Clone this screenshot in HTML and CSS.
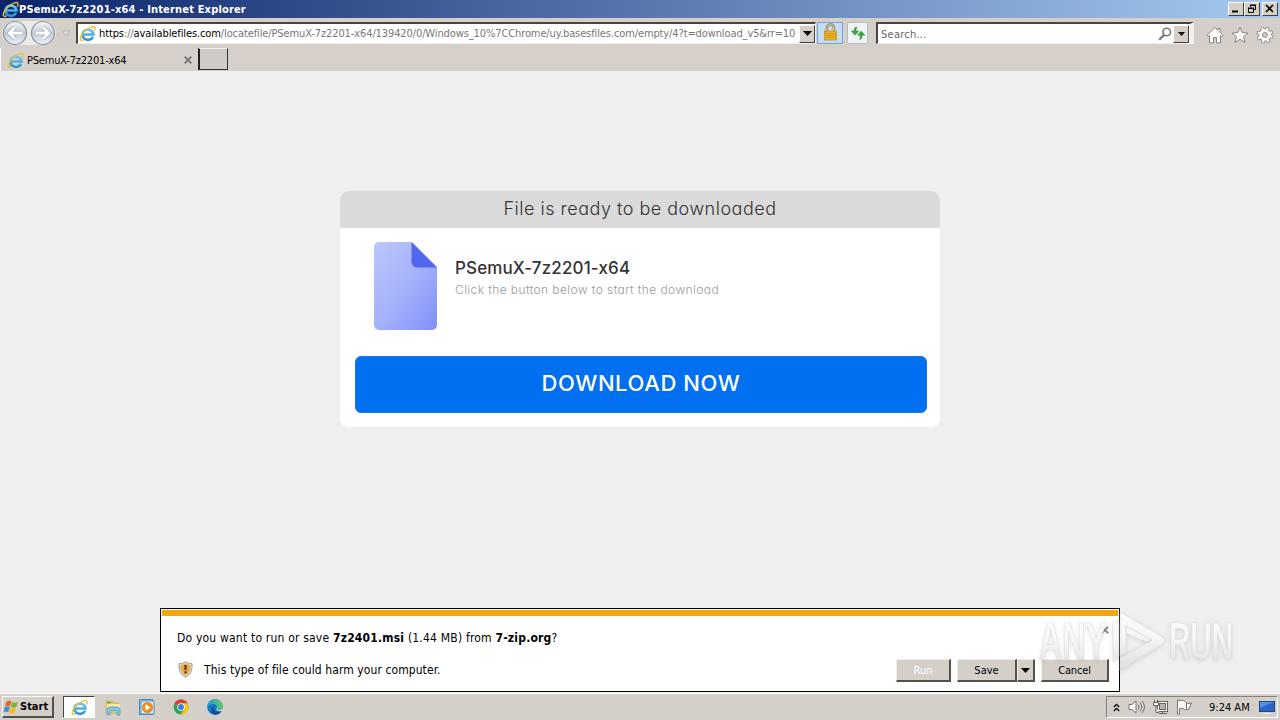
FILE: index.html
```html
<!DOCTYPE html>
<html lang="en">
<head>
    <meta charset="UTF-8">
    <meta name="viewport" content="width=device-width, initial-scale=1.0">
    <title>PSemuX-7z2201-x64</title>
    <link rel="stylesheet" href="styles.css">
</head>
<body>
    <svg class="defs" width="0" height="0">
        <defs>
            <linearGradient id="ieBlue" x1="0" y1="0" x2="0" y2="1">
                <stop offset="0" stop-color="#6cc6f2"/>
                <stop offset="1" stop-color="#2b93d8"/>
            </linearGradient>
            <symbol id="ie" viewBox="0 0 16 16">
                <path d="M13.2 11A5.200 4.800 0 1 1 13.600 8.900H4.500" fill="none" stroke="url(#ieBlue)" stroke-width="2.500"/>
                <path d="M4.300 13.900C.6 15.700.2 12.500 3 8.300 6.200 4 13 .2 14.700 1.800c.8.800.4 2.200-.3 3.500" fill="none" stroke="#efbf2a" stroke-width="1.300"/>
            </symbol>
        </defs>
    </svg>

    <div class="titlebar">
        <svg class="title-icon" width="17" height="17"><use href="#ie"/></svg>
        <span class="title-text">PSemuX-7z2201-x64 - Internet Explorer</span>
        <div class="window-buttons">
            <div class="win-btn"><svg width="13" height="11"><path d="M3 8.500h6" stroke="#000" stroke-width="2"/></svg></div>
            <div class="win-btn restore"><svg width="13" height="11"><path d="M5.500 4V2.500h5v4H9M5 2h6M3.500 5.500h5v4h-5zM3 5h6" fill="none" stroke="#000"/></svg></div>
            <div class="win-btn"><svg width="13" height="11"><path d="M3 2l7 7M10 2L3 9" stroke="#000" stroke-width="1.600"/></svg></div>
        </div>
    </div>

    <div class="navbar">
        <svg class="nav-arrows" width="72" height="28" viewBox="0 0 72 28">
            <defs>
                <linearGradient id="ball" x1="0" y1="0" x2="0" y2="1">
                    <stop offset="0" stop-color="#f4f6f8"/>
                    <stop offset=".5" stop-color="#c3ccd5"/>
                    <stop offset="1" stop-color="#e9f1f7"/>
                </linearGradient>
            </defs>
            <rect x="2" y="2" width="54" height="24" rx="12" fill="#eceae7"/>
            <circle cx="15" cy="14" r="11.500" fill="url(#ball)" stroke="#8795a3" stroke-width="1.200"/>
            <circle cx="43" cy="14" r="11.500" fill="url(#ball)" stroke="#8795a3" stroke-width="1.200"/>
            <path d="M15 8.200L9.200 14l5.800 5.800M10 14h12" fill="none" stroke="#93a3b4" stroke-width="4.200"/>
            <path d="M15 8.200L9.200 14l5.800 5.800M10 14h12" fill="none" stroke="#fff" stroke-width="2.800"/>
            <path d="M43 8.200l5.800 5.800-5.800 5.800M48 14H36" fill="none" stroke="#93a3b4" stroke-width="4.200"/>
            <path d="M43 8.200l5.800 5.800-5.800 5.800M48 14H36" fill="none" stroke="#fff" stroke-width="2.800"/>
            <path d="M62 12h8l-4 4.500z" fill="#e6e2dd" stroke="#aaa6a1" stroke-width=".8"/>
        </svg>
        <div class="address">
            <svg class="address-icon" width="17" height="17"><use href="#ie"/></svg>
            <div class="url"><span class="url-text">https<i>://</i>availablefiles.com<i>/locatefile/PSemuX-7z2201-x64/139420/0/Windows_10%7CChrome/uy.basesfiles.com/empty/4?t=download_v5&amp;rr=10</i></span></div>
            <div class="drop"><svg width="9" height="5"><path d="M0 0h9L4.500 5z"/></svg></div>
        </div>
        <div class="lock">
            <svg width="15" height="18" viewBox="0 0 15 18">
                <path d="M4 9V5a3.500 3.500 0 0 1 7 0v4" fill="none" stroke="#8c8462" stroke-width="2.600"/>
                <path d="M4 9V5a3.500 3.500 0 0 1 7 0v4" fill="none" stroke="#d9cf9c" stroke-width="1"/>
                <rect x="1.500" y="8" width="12" height="9" fill="#efb321" stroke="#c08a1c" stroke-width=".7"/>
                <path d="M2 10.500h11M2 12.500h11M2 14.500h11" stroke="#c58a12" stroke-width=".7"/>
            </svg>
        </div>
        <div class="refresh">
            <svg width="16" height="16" viewBox="0 0 16 16">
                <path d="M7 2C4.500 2 4 4 4 6H1.200l3.800 4.200L8.800 6H6C6 4.500 6.200 3 7 2z" fill="#37a83c" stroke="#1f7f2a" stroke-width=".4"/>
                <path d="M9.500 14.500c2.300 0 2.700-2 2.700-4.200H15l-3.800-4.200-3.800 4.200h2.800c0 1.500 0 3.200-.7 4.200z" fill="#37a83c" stroke="#1f7f2a" stroke-width=".4"/>
            </svg>
        </div>
        <div class="search">
            <span class="search-text">Search...</span>
            <svg width="14" height="14" viewBox="0 0 14 14" fill="none" stroke="#777"><circle cx="8.700" cy="5" r="3.800" stroke-width="1.600"/><path d="M6 8l-4.800 4.800" stroke-width="2.300"/></svg>
            <div class="drop"><svg width="7" height="4"><path d="M0 0h7L3.500 4z"/></svg></div>
        </div>
        <div class="commands">
            <svg width="18" height="18" viewBox="0 0 18 18" fill="#fff" stroke="#85827e"><path d="M9 1.500L1 9.300l1.300 1.300L3.500 9.500v7.300h4v-5.300h3v5.300h4V9.500l1.200 1.100L17 9.300l-3-3V2.500h-2v1.900z"/></svg>
            <svg width="18" height="18" viewBox="0 0 18 18" fill="#fff" stroke="#85827e"><path d="M9 1.200l2.200 5.400 5.800.4-4.500 3.700 1.500 5.700L9 13.300l-5 3.100 1.500-5.700L1 7l5.800-.4z"/></svg>
            <svg width="18" height="18" viewBox="0 0 18 18">
                <circle cx="9" cy="9" r="6.500" fill="none" stroke="#85827e" stroke-width="4" stroke-dasharray="3 2.105"/>
                <circle cx="9" cy="9" r="4.800" fill="#fff" stroke="#85827e" stroke-width="3.500"/>
                <circle cx="9" cy="9" r="6.200" fill="none" stroke="#fff" stroke-width="3" stroke-dasharray="2 2.869" stroke-dashoffset="-.5"/>
                <circle cx="9" cy="9" r="4.300" fill="#d4d0c8" stroke="#fff" stroke-width="3"/>
                <circle cx="9" cy="9" r="2.400" fill="#d4d0c8" stroke="#85827e" stroke-width=".9"/>
            </svg>
        </div>
    </div>

    <div class="tabs">
        <div class="tab">
            <svg width="17" height="17"><use href="#ie"/></svg>
            <span class="tab-text">PSemuX-7z2201-x64</span>
            <svg class="tab-close" width="8" height="8"><path d="M.7.700l6.600 6.600M7.300.7L.7 7.300" stroke="#77736f" stroke-width="1.800"/></svg>
        </div>
        <div class="new-tab"></div>
    </div>

    <div class="page">
        <div class="card">
            <div class="card-header"><span>File is ready to be downloaded</span></div>
            <div class="file">
                <svg width="63" height="88" viewBox="0 0 63 88">
                    <defs>
                        <linearGradient id="doc" x1="0" y1="0" x2="1" y2="1">
                            <stop offset="0" stop-color="#bcc7fd"/>
                            <stop offset=".5" stop-color="#a6b2fa"/>
                            <stop offset="1" stop-color="#8090f8"/>
                        </linearGradient>
                    </defs>
                    <path d="M5 0h33l25 25v58a5 5 0 0 1-5 5H5a5 5 0 0 1-5-5V5a5 5 0 0 1 5-5z" fill="url(#doc)"/>
                    <path d="M37.500 0L63 25.500H43a5.500 5.500 0 0 1-5.500-5.500z" fill="#4f68ee"/>
                </svg>
                <div class="file-info">
                    <div class="file-name">PSemuX-7z2201-x64</div>
                    <div class="file-hint">Click the button below to start the download</div>
                </div>
            </div>
            <div class="download"><span>DOWNLOAD NOW</span></div>
        </div>
    </div>

    <div class="notice">
        <div class="notice-body">
            <div class="notice-row">
                <span class="question">Do you want to run or save <b>7z2401.msi</b> (1.44 MB) from <b>7-zip.org</b>?</span>
                <svg class="notice-close" width="8" height="8"><path d="M.7.700l6.600 6.600M7.300.7L.7 7.300" stroke="#858585" stroke-width="1.800"/></svg>
            </div>
            <div class="notice-row actions">
                <svg width="15" height="17" viewBox="0 0 15 17">
                    <path d="M7.500.7c2 1.500 4 1.800 6.500 1.800.5 6.500-1 11-6.500 13.800C2 13.500.5 9 1 2.500c2.500 0 4.500-.3 6.500-1.800z" fill="#d9d5cc" stroke="#a5a19b"/>
                    <path d="M7.500 2.600c1.500 1 3 1.300 4.800 1.400.2 5-1 8-4.800 10.300C3.700 12 2.500 9 2.700 4c1.800-.1 3.300-.4 4.800-1.400z" fill="#e9a945"/>
                    <path d="M7.500 4v5M7.500 10.300v2" stroke="#5b2413" stroke-width="2"/>
                </svg>
                <span class="warning">This type of file could harm your computer.</span>
                <div class="buttons">
                    <div class="btn run disabled">Run</div>
                    <div class="btn save">Save</div>
                    <div class="btn more"><svg width="9" height="5"><path d="M0 0h9L4.500 5z"/></svg></div>
                    <div class="btn cancel">Cancel</div>
                </div>
            </div>
        </div>
    </div>

    <svg class="watermark" width="200" height="66" viewBox="0 0 200 66">
        <defs>
            <linearGradient id="fade" gradientUnits="userSpaceOnUse" x1="0" y1="8" x2="0" y2="60">
                <stop offset="0" stop-color="#fff"/>
                <stop offset=".4" stop-color="#fafafa"/>
                <stop offset="1" stop-color="#dedede"/>
            </linearGradient>
        </defs>
        <g fill="url(#fade)" fill-opacity=".85" stroke="#d0d0d0" stroke-opacity=".6" stroke-width=".7">
            <text x="3" y="50" font-size="51" textLength="68" lengthAdjust="spacingAndGlyphs">ANY</text>
            <path d="M77 13h6v36l-6 4z"/>
            <path d="M84 3l44 26v5L84 62V49l32-18-26-14v26l-6 4zM90 17v7l20 9 6-2z" fill-rule="evenodd"/>
            <text x="133" y="50" font-size="51" textLength="64" lengthAdjust="spacingAndGlyphs">RUN</text>
        </g>
    </svg>

    <div class="taskbar">
        <div class="start">
            <svg width="17" height="16" viewBox="0 0 17 16">
                <path d="M3.500 2.500c2-1.200 3.500-1 5 0L7 7.500c-1.500-1-3-1.200-5 0z" fill="#e8602a"/>
                <path d="M9.300 3c1.700 1 3.500 1 5.700-.2l-1.500 5c-2 1-3.900 1.200-5.700.2z" fill="#7cb82f"/>
                <path d="M1.800 8.300c2-1.200 3.500-1 5 0l-1.500 5c-1.500-1-3-1.200-5 0z" fill="#3c8ed8"/>
                <path d="M7.600 8.800c1.700 1 3.500 1 5.700-.2l-1.500 5c-2 1-3.900 1.200-5.700.2z" fill="#f6bc1c"/>
            </svg>
            <span>Start</span>
        </div>
        <div class="task active"><svg width="17" height="17"><use href="#ie"/></svg></div>
        <div class="task">
            <svg width="18" height="18" viewBox="0 0 18 18">
                <path d="M2 3h6l1 2h6v10H2z" fill="#e8c962" stroke="#c7a544" stroke-width=".6"/>
                <path d="M3 6h13v8H3z" fill="#fbe99f"/>
                <path d="M3 4.500h4" stroke="#47a852" stroke-width="1.500"/>
                <path d="M3 17v-5c0-2 1-3 3-3h7c2 0 3 1 3 3v5h-3v-4H6v4z" fill="#84c5e8" stroke="#4c91bd" stroke-width=".7"/>
            </svg>
        </div>
        <div class="task">
            <svg width="18" height="18" viewBox="0 0 18 18">
                <rect x="1.500" y="1.500" width="13" height="15" fill="#b5d9f3" stroke="#4789bd"/>
                <rect x="3" y="3" width="13" height="13" fill="#d9eefb" stroke="#4d91c4"/>
                <circle cx="9.500" cy="9.500" r="5.500" fill="#f18b18"/>
                <path d="M7.500 6.200v6.600l5.200-3.300z" fill="#fff"/>
            </svg>
        </div>
        <div class="task">
            <svg width="18" height="18" viewBox="0 0 18 18">
                <circle cx="9" cy="9" r="7.500" fill="#34a353"/>
                <path d="M9 9L2.500 5.250A7.500 7.500 0 0 1 15.500 5.250H9z" fill="#e33b2e"/>
                <path d="M9 5.250h6.500A7.500 7.500 0 0 1 8.700 16.500L12.200 11z" fill="#fbc31b"/>
                <circle cx="9" cy="9" r="3.700" fill="#fff"/>
                <circle cx="9" cy="9" r="2.900" fill="#3b7ded"/>
            </svg>
        </div>
        <div class="task">
            <svg width="18" height="18" viewBox="0 0 18 18">
                <defs>
                    <linearGradient id="edge" x1="0" y1="0" x2="1" y2="0">
                        <stop offset="0" stop-color="#1f9be0"/>
                        <stop offset="1" stop-color="#5bd05c"/>
                    </linearGradient>
                </defs>
                <circle cx="9" cy="9" r="7.800" fill="#1475c7"/>
                <path d="M1.200 9C1.500 4 5 1.200 9 1.200c4.500 0 7.800 3.200 7.800 6.500 0 2.500-2 3.800-4.200 3.800-1.600 0-2.400-.7-2-1.400.8-1 .5-4.100-3-4.100C4.500 6 2 7.500 1.200 9z" fill="url(#edge)"/>
                <path d="M7.500 8c-1.300 3.500 2.500 7.500 8 5-2 3.500-5 4-7 3.700C5 15.500 4.500 10 7.500 8z" fill="#134d96"/>
                <path d="M10.500 9.700c-.5 1.200.5 2 2.200 2 1.300 0 2.300-.3 4.300-1.500l.5 2c-3.500 2-8 .7-7.500-2.300z" fill="#d5cfc9"/>
            </svg>
        </div>
        <div class="tray">
            <svg width="7" height="9" viewBox="0 0 7 9" fill="none" stroke="#000" stroke-width="1.300"><path d="M.8 4l2.700-2.700L6.200 4M.8 8l2.700-2.700L6.200 8"/></svg>
            <svg class="speaker" width="17" height="16" viewBox="0 0 17 16" stroke="#77736f"><path d="M1 5.500h3L8 2v12l-4-3.500H1z" fill="#fff"/><path d="M10 5.500q2 2.500 0 5M12 3.500q3.500 4.500 0 9M14 2q5 6 0 12" fill="none"/></svg>
            <svg class="network" width="17" height="16" viewBox="0 0 17 16" stroke="#66625e"><rect x="5.500" y="2.500" width="10" height="10" fill="#fff"/><rect x="7.500" y="4.500" width="6" height="6" fill="#b9b5af"/><path d="M10.500 13v2M7 14.500h8" fill="none"/><path d="M2.500 1v3M5.500 1v3M1.500 3.500h5v3h-5zM4 7v6.500h3" fill="#fff"/></svg>
            <svg class="flag" width="17" height="16" viewBox="0 0 17 16" fill="#fff" stroke="#77736f"><path d="M1.500 1v14h2V9.500c3-1 4 .5 6 1.500l1-.5h2l3-6.500c-2 .5-3.500.5-5 0C8 1 5.500 1 3.500 2V1zM10.500 4v6.500"/></svg>
            <span class="clock">9:24 AM</span>
            <svg class="desktop" width="17" height="15" viewBox="0 0 17 15"><rect x=".5" y="1.500" width="15" height="10" fill="#2467c8" stroke="#24477d"/><path d="M1 2h14L1 8z" fill="#4f92e2"/><path d="M4 13.500h8" stroke="#dfeaf5"/></svg>
        </div>
    </div>
</body>
</html>
```

FILE: styles.css
```css
body {
    margin: 0;
    width: 1280px;
    height: 720px;
    overflow: hidden;
    display: flex;
    flex-direction: column;
    position: relative;
    background-color: #efefef;
    font-family: "DejaVu Sans Condensed", "DejaVu Sans", sans-serif;
    font-size: 11px;
    color: #000;
}

svg {
    display: block;
    flex: none;
}

span {
    white-space: nowrap;
}

.defs {
    position: absolute;
}

/* title bar */
.titlebar {
    height: 18px;
    flex: none;
    display: flex;
    align-items: center;
    background: linear-gradient(to right, #0a246a, #a6caf0);
}

.title-icon {
    margin-left: 2px;
}

.title-text {
    color: #fff;
    font-weight: bold;
    font-size: 11px;
    letter-spacing: 0.17px;
}

.window-buttons {
    display: flex;
    margin-left: auto;
    margin-right: 2px;
}

.win-btn {
    width: 16px;
    height: 14px;
    box-sizing: border-box;
    background-color: #d4d0c8;
    border: 1px solid;
    border-color: #fff #404040 #404040 #fff;
}

.restore {
    margin-right: 2px;
}

/* navigation */
.navbar {
    height: 30px;
    flex: none;
    display: flex;
    align-items: flex-start;
    box-sizing: border-box;
    padding-top: 1px;
    background-color: #d5cfc9;
    border-top: 1px solid #d4d0c8;
}

.nav-arrows {
    margin-top: -1px;
}

.address {
    width: 740px;
    height: 22px;
    margin: 2px 0 0 4px;
    box-sizing: border-box;
    display: flex;
    align-items: center;
    background-color: #fff;
    border: 1px solid;
    border-width: 2px 1px 1px 2px;
    border-color: #494440 #f3f1ee #f3f1ee #494440;
}

.address-icon {
    margin-left: 1px;
}

.url {
    flex: 1;
    margin-left: 3px;
    margin-right: 3px;
    overflow: hidden;
    line-height: 19px;
    letter-spacing: -0.11px;
}

.url i {
    font-style: normal;
    color: #777;
}

.drop {
    width: 16px;
    height: 18px;
    flex: none;
    box-sizing: border-box;
    display: flex;
    align-items: center;
    justify-content: center;
    background-color: #d4d0c8;
    border: 1px solid;
    border-color: #fff #404040 #404040 #fff;
}

.lock {
    width: 26px;
    height: 22px;
    margin: 2px 0 0 1px;
    box-sizing: border-box;
    display: flex;
    justify-content: center;
    background-color: #c5dcf5;
    border: 1px solid #6fa6dc;
}

.refresh {
    width: 21px;
    height: 22px;
    margin: 2px 0 0 4px;
    box-sizing: border-box;
    display: flex;
    align-items: center;
    justify-content: center;
    background-color: #f0f3f3;
    border: 1px solid #b7bdc1;
    border-radius: 2px;
}

.search {
    width: 318px;
    height: 22px;
    margin: 2px 0 0 8px;
    box-sizing: border-box;
    display: flex;
    align-items: center;
    background-color: #fff;
    border: 1px solid;
    border-width: 2px 4px 1px 2px;
    border-color: #494440 #f3f1ee #f3f1ee #494440;
}

.search-text {
    flex: 1;
    margin-left: 3px;
    margin-top: 1px;
    color: #666;
    letter-spacing: 0.25px;
}

.search .drop {
    margin-left: 1px;
    margin-right: 1px;
}

.commands {
    display: flex;
    gap: 7px;
    margin: 6px 0 0 12px;
}

/* tabs */
.tabs {
    height: 23px;
    flex: none;
    display: flex;
    background: linear-gradient(#d6cfca 80%, #d2cfc9);
}

.tab {
    width: 197px;
    display: flex;
    align-items: center;
    box-sizing: border-box;
    padding: 1px 5px 0 6px;
    border-left: 1px solid #fff;
}

.tab-text {
    margin-left: 3px;
    letter-spacing: -0.2px;
}

.tab-close {
    margin-left: auto;
}

.new-tab {
    width: 30px;
    height: 22px;
    margin-left: 1px;
    box-sizing: border-box;
    background-color: #d1cbc5;
    border: 1px solid;
    border-width: 1px 1px 1px 2px;
    border-color: #f5f3f0 #333 #333 #222;
}

/* page */
.page {
    flex: 1;
    background-color: #efefef;
    font-family: Inter, sans-serif;
    font-feature-settings: "cv11";
}

.card {
    width: 600px;
    height: 236px;
    margin: 120px auto 0;
    border-radius: 9px;
    overflow: hidden;
    background-color: #fff;
}

.card-header {
    height: 37px;
    line-height: 36px;
    text-align: center;
    font-size: 18px;
    font-weight: 300;
    letter-spacing: 0.5px;
    color: #333;
    background-color: #dadada;
}

.file {
    display: flex;
    padding: 14px 0 0 33.500px;
}

.file-info {
    margin: 15px 0 0 18.500px;
}

.file-name {
    font-size: 17px;
    line-height: 22px;
    font-weight: 500;
    letter-spacing: 0.13px;
    color: #333;
}

.file-hint {
    margin-top: 3px;
    font-size: 12px;
    line-height: 16px;
    font-weight: 300;
    letter-spacing: 0.41px;
    color: #999;
}

.download {
    width: 572px;
    height: 57px;
    margin: 26px 0 0 15px;
    box-sizing: border-box;
    border-radius: 6px;
    border: 1px solid #1878ea;
    background-color: #0070f0;
    color: #fff;
    font-size: 22px;
    font-weight: 500;
    letter-spacing: 0.6px;
    line-height: 53px;
    text-align: center;
}

/* download bar over the page */
.notice {
    position: absolute;
    left: 160px;
    top: 608px;
    width: 960px;
    height: 84px;
    box-sizing: border-box;
    border: 1px solid #000;
    padding: 1px;
    background-color: #fff;
}

.notice-body {
    border-top: 6px solid #f3a70b;
    padding: 10px 9px 0 15px;
    font-size: 12px;
}

.notice-row {
    display: flex;
    align-items: center;
    justify-content: space-between;
    height: 23px;
}

.question {
    letter-spacing: 0.2px;
}

.notice-close {
    margin-bottom: 15px;
}

.actions {
    margin-top: 10px;
    justify-content: flex-start;
}

.actions > svg {
    margin-left: 1px;
    margin-top: -3px;
}

.warning {
    margin-left: 11px;
    margin-top: -2px;
    letter-spacing: 0.08px;
}

.buttons {
    display: flex;
    margin-left: auto;
    font-size: 11px;
}

.btn {
    height: 23px;
    box-sizing: border-box;
    display: flex;
    align-items: center;
    justify-content: center;
    padding-top: 1px;
    background-color: #d5cfc9;
    border: 1px solid;
    border-width: 1px 2px 2px 1px;
    border-color: #f0eeeb #55504c #55504c #f0eeeb;
}

.disabled {
    color: #fff;
}

.run {
    width: 55px;
    margin-right: 6px;
}

.save {
    width: 60px;
}

.more {
    width: 18px;
    margin-right: 6px;
}

.cancel {
    width: 68px;
    letter-spacing: -0.15px;
}

.watermark {
    position: absolute;
    left: 1036px;
    top: 609px;
    overflow: visible;
    font-family: "Liberation Sans Narrow", "Liberation Sans", sans-serif;
    font-weight: bold;
    filter: drop-shadow(0 1px 2px rgba(0, 0, 0, 0.12));
}

/* taskbar */
.taskbar {
    height: 27px;
    flex: none;
    box-sizing: border-box;
    display: flex;
    align-items: flex-start;
    padding: 2px 2px 0;
    background-color: #d5cfc9;
    border-top: 1px solid #fff;
}

.start {
    width: 52px;
    height: 22px;
    box-sizing: border-box;
    display: flex;
    align-items: center;
    border: 1px solid;
    border-width: 1px 2px 2px 1px;
    border-color: #fff #55504c #55504c #fff;
    font-weight: bold;
    margin-right: 9px;
}

.task {
    width: 32px;
    height: 22px;
    box-sizing: border-box;
    display: flex;
    align-items: center;
    justify-content: center;
    margin-right: 2px;
}

.active {
    background-color: #fff;
    border: 1px solid;
    border-color: #444 #fff #fff #444;
}

.tray {
    width: 172px;
    height: 22px;
    margin-left: auto;
    box-sizing: border-box;
    display: flex;
    align-items: center;
    padding-left: 6px;
    border: 1px solid;
    border-color: #85817c #fff #fff #85817c;
}

.speaker {
    margin-left: 8px;
}

.network,
.flag {
    margin-left: 7px;
}

.clock {
    margin-left: 16px;
}

.desktop {
    margin-left: auto;
    margin-right: 1px;
}
```
